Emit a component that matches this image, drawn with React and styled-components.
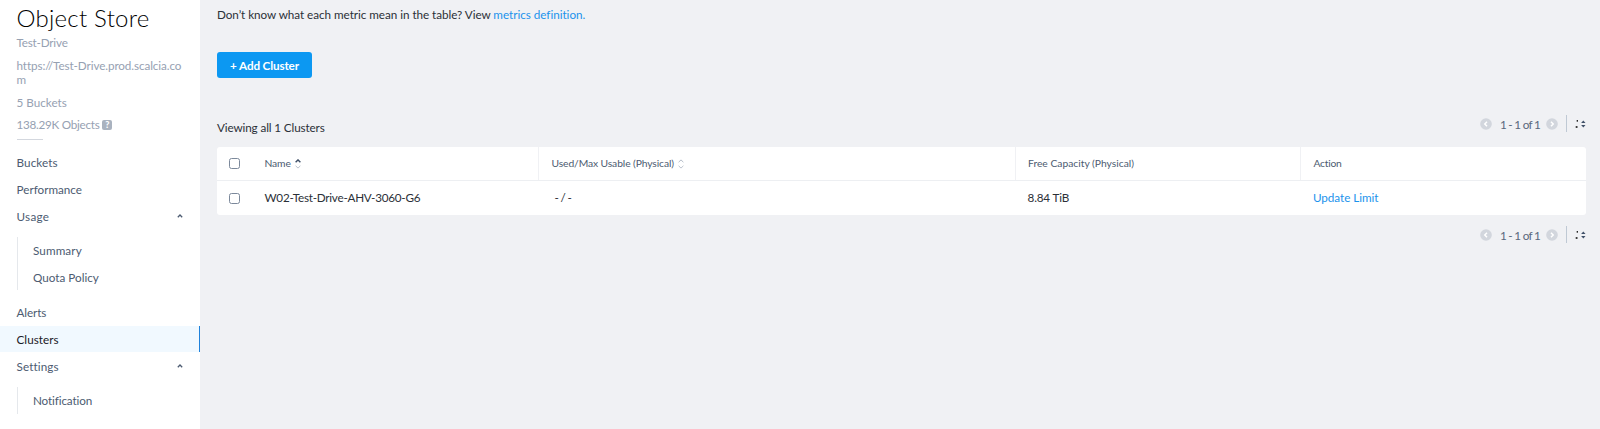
import React from "react";
import styled, { createGlobalStyle } from "styled-components";

const GlobalStyle = createGlobalStyle`
  * {
    box-sizing: border-box;
  }
  body {
    margin: 0;
    background: #f0f1f4;
    font-family: Lato, "Liberation Sans", sans-serif;
    font-size: 11.7px;
    color: #2b3037;
  }
`;

const Page = styled.div`
  display: flex;
  height: 429px;
  overflow: hidden;
`;

const Sidebar = styled.aside`
  flex: 0 0 200px;
  background: #fff;
  padding-top: 3px;
`;

const Text = styled.span`
  letter-spacing: ${(p) => p.$track || 0}px;
`;

const StoreInfo = styled.div`
  padding: 0 16.5px;
  height: 146px;
  color: #96a1b2;
`;

const Title = styled.h1`
  margin: 0;
  font-size: 24px;
  line-height: 29px;
  font-weight: 300;
  letter-spacing: 0.25px;
  color: #000;
`;

const InfoLine = styled.div`
  display: flex;
  align-items: center;
  line-height: 14.5px;
  margin-bottom: 8.1px;
  word-break: break-all;
  padding-top: ${(p) => (p.$first ? "3px" : "0")};
`;

const HelpBadge = styled.span`
  width: 10px;
  height: 10px;
  margin-left: 3px;
  border-radius: 2px;
  background: #a9b2bf;
  color: #fff;
  font-size: 9px;
  font-weight: 900;
  line-height: 10px;
  text-align: center;
`;

const Divider = styled.div`
  width: 26px;
  height: 1px;
  margin-top: -1px;
  background: #d3d7de;
`;

const NavItem = styled.a`
  display: flex;
  align-items: center;
  justify-content: space-between;
  height: 26.7px;
  padding: 0 17px 0 16.5px;
  color: ${(p) => (p.$active ? "#1b2026" : "#4c5b71")};
  background: ${(p) => (p.$active ? "#f1f9ff" : "transparent")};
  border-right: ${(p) => (p.$active ? "1.5px solid #1f82dc" : "none")};
`;

const SubNav = styled.div`
  margin: 8px 0 8.6px 17px;
  border-left: 1px solid #e5e8ec;

  ${NavItem} {
    padding-left: 15px;
  }
`;

const Main = styled.main`
  flex: 1;
  padding: 6px 14px 0 17px;
`;

const Intro = styled.p`
  margin: 0;
  height: 46px;
  line-height: 17px;
  white-space: pre;
`;

const Link = styled.a`
  color: #1b93ec;
  letter-spacing: ${(p) => p.$track || 0}px;
`;

const AddButton = styled.button`
  display: block;
  width: 95px;
  height: 26px;
  padding: 0 0 1px;
  border: 0;
  border-radius: 3px;
  background: #0c98f2;
  color: #fff;
  font: 700 11.7px Lato, sans-serif;
  letter-spacing: -0.14px;
`;

const TableTop = styled.div`
  display: flex;
  justify-content: space-between;
  height: 69px;
  padding-top: 35px;
`;

const Viewing = styled.div`
  padding-top: 7px;
  line-height: 15px;
  letter-spacing: -0.12px;
`;

const Pager = styled.div`
  display: flex;
  align-items: center;
  height: 21px;
  color: #59687c;
`;

const PageCount = styled.span`
  width: 38px;
  margin: 0 7.5px 0 8.5px;
  white-space: nowrap;
  letter-spacing: -0.55px;
  word-spacing: -0.3px;
`;

const PagerLine = styled.span`
  width: 1px;
  height: 17px;
  margin: 0 8px 0 8.5px;
  background: #bfc9d4;
`;

const Table = styled.div`
  height: 67.5px;
  border-radius: 3px;
  background: #fff;
  overflow: hidden;
`;

const Row = styled.div`
  display: grid;
  grid-template-columns: 47.5px 274px 477px 285px 1fr;
  height: ${(p) => (p.$head ? "34px" : "33.5px")};
  border-bottom: ${(p) => (p.$head ? "1px solid #edeff2" : "none")};
  font-size: ${(p) => (p.$head ? "10.3px" : "11.7px")};
  color: ${(p) => (p.$head ? "#4c5b71" : "#2b3037")};
`;

const Cell = styled.div`
  display: flex;
  align-items: center;
  white-space: nowrap;
  padding-left: ${(p) => p.$pad || 0}px;
  padding-bottom: ${(p) => (p.$check ? 0 : 1.6)}px;
  border-right: ${(p) => (p.$line ? "1px solid #f0f1f4" : "none")};
`;

const Checkbox = styled.span`
  width: 11px;
  height: 11px;
  margin-top: ${(p) => p.$shift || 0}px;
  border: 1px solid #7c899b;
  border-radius: 2.5px;
  background: #fff;
`;

const BottomBar = styled.div`
  display: flex;
  justify-content: flex-end;
  padding-top: 9.5px;
`;

const Caret = () => (
  <svg width="6" height="4" viewBox="0 0 6 4" fill="none">
    <path d="M0.8 3.2L3 1L5.2 3.2" stroke="#4c5b71" strokeWidth="1.3" />
  </svg>
);

const SortIcon = styled(({ className, up }) => (
  <svg className={className} width="6" height="10" viewBox="0 0 6 10" fill="none">
    <path d="M0.6 3.2L3 0.9L5.4 3.2" stroke={up ? "#3f5068" : "#b4bcc7"} strokeWidth={up ? 1.4 : 1} />
    <path d="M0.6 6.8L3 9.1L5.4 6.8" stroke="#bcc3cd" />
  </svg>
))`
  margin-left: 4.5px;
  margin-top: 3px;
`;

const Arrow = ({ right }) => (
  <svg width="12" height="12" viewBox="0 0 12 12" fill="none">
    <circle cx="6" cy="6" r="5.8" fill="#d2d6dd" />
    <path d={right ? "M5 3.8L7.2 6L5 8.2" : "M7 3.8L4.8 6L7 8.2"} stroke="#fff" strokeWidth="1.5" />
  </svg>
);

const PageSizeIcon = () => (
  <svg width="11" height="10" viewBox="0 0 11 10">
    <rect x="1.7" y="1" width="1.2" height="1.7" fill="#111" />
    <rect x="0.7" y="7.2" width="1.8" height="1.6" fill="#111" />
    <path d="M6.1 4L8.3 1.5L10.5 4Z" fill="#3f5068" />
    <path d="M6.1 6L8.3 8.5L10.5 6Z" fill="#3f5068" />
  </svg>
);

const Pagination = () => (
  <Pager>
    <Arrow />
    <PageCount>1 - 1 of 1</PageCount>
    <Arrow right />
    <PagerLine />
    <PageSizeIcon />
  </Pager>
);

export function App() {
  return (
    <Page>
      <GlobalStyle />
      <Sidebar>
        <StoreInfo>
          <Title>Object Store</Title>
          <InfoLine $first><Text $track={-0.2}>Test-Drive</Text></InfoLine>
          <InfoLine><Text $track={-0.09}>https://Test-Drive.prod.scalcia.com</Text></InfoLine>
          <InfoLine><Text>5 Buckets</Text></InfoLine>
          <InfoLine>
            <Text $track={-0.27}>138.29K Objects</Text>
            <HelpBadge>?</HelpBadge>
          </InfoLine>
          <Divider />
        </StoreInfo>
        <NavItem><Text $track={0.1}>Buckets</Text></NavItem>
        <NavItem><Text>Performance</Text></NavItem>
        <NavItem><Text $track={0.3}>Usage</Text><Caret /></NavItem>
        <SubNav>
          <NavItem><Text $track={0.1}>Summary</Text></NavItem>
          <NavItem><Text>Quota Policy</Text></NavItem>
        </SubNav>
        <NavItem><Text $track={-0.1}>Alerts</Text></NavItem>
        <NavItem $active><Text $track={0.03}>Clusters</Text></NavItem>
        <NavItem><Text $track={0.12}>Settings</Text><Caret /></NavItem>
        <SubNav>
          <NavItem><Text $track={-0.13}>Notification</Text></NavItem>
        </SubNav>
      </Sidebar>
      <Main>
        <Intro>
          <Text $track={-0.04}>Don’t know what each metric mean in the table? View </Text>
          <Link $track={-0.03}>metrics definition.</Link>
        </Intro>
        <AddButton>+ Add Cluster</AddButton>
        <TableTop>
          <Viewing>Viewing all 1 Clusters</Viewing>
          <Pagination />
        </TableTop>
        <Table>
          <Row $head>
            <Cell $check $pad={12}><Checkbox $shift={-1} /></Cell>
            <Cell $line><Text $track={-0.1}>Name</Text><SortIcon up /></Cell>
            <Cell $line $pad={13}><Text $track={-0.1}>Used/Max Usable (Physical)</Text><SortIcon /></Cell>
            <Cell $line $pad={12.5}><Text>Free Capacity (Physical)</Text></Cell>
            <Cell $pad={13}><Text $track={-0.25}>Action</Text></Cell>
          </Row>
          <Row>
            <Cell $check $pad={12}><Checkbox $shift={1} /></Cell>
            <Cell><Text $track={-0.25}>W02-Test-Drive-AHV-3060-G6</Text></Cell>
            <Cell $pad={16}><Text $track={-0.65}>- / -</Text></Cell>
            <Cell $pad={12}><Text $track={-0.15}>8.84 TiB</Text></Cell>
            <Cell $pad={12.5}><Link $track={-0.05}>Update Limit</Link></Cell>
          </Row>
        </Table>
        <BottomBar>
          <Pagination />
        </BottomBar>
      </Main>
    </Page>
  );
}

export default App;
